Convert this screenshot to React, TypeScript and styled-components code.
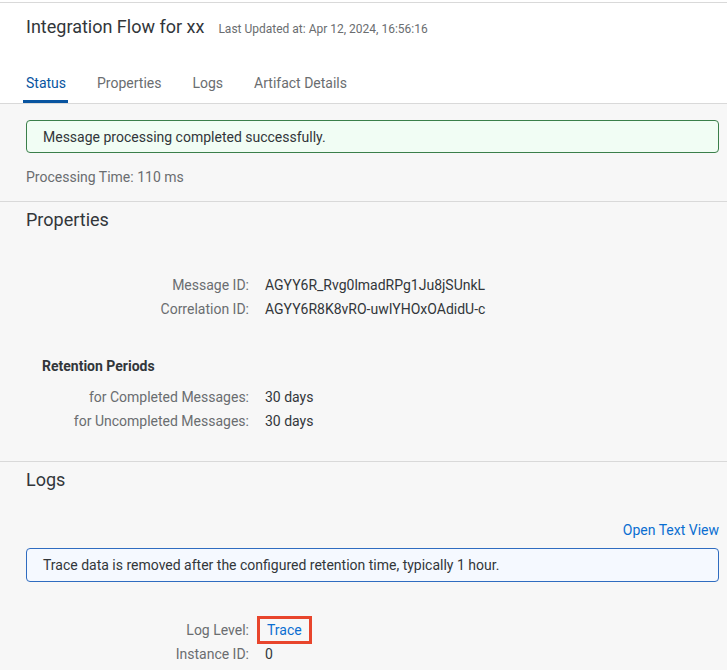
import React from "react";
import styled, { createGlobalStyle } from "styled-components";

const Global = createGlobalStyle`
  html, body { margin: 0; padding: 0; background: #f7f7f7; }
  body { font-family: Roboto, "Liberation Sans", Arial, sans-serif; color: #32363a; }
  * { box-sizing: border-box; }
`;

const Page = styled.div`
  display: flex;
  flex-direction: column;
  padding-top: 2px;
  background: #fff;
`;

const Header = styled.header`
  background: #fff;
  border-top: 1px solid #d9d9d9;
  padding: 12px 26px 0;
  border-bottom: 1px solid #d9d9d9;
`;

const TitleRow = styled.div`
  display: flex;
  align-items: baseline;
  gap: 14px;
  height: 24px;
`;

const Title = styled.h1`
  margin: 0;
  font-size: 18px;
  font-weight: 400;
  line-height: 24px;
  color: #32363a;
`;

const Updated = styled.span`
  font-size: 12px;
  color: #6a6d70;
`;

const Tabs = styled.nav`
  display: flex;
  gap: 31px;
  margin-top: 23px;
  height: 41px;
`;

const Tab = styled.div<{ $active?: boolean }>`
  position: relative;
  display: flex;
  align-items: center;
  font-size: 14px;
  color: ${(p) => (p.$active ? "#0854a0" : "#6a6d70")};
  &::after {
    content: "";
    display: ${(p) => (p.$active ? "block" : "none")};
    position: absolute;
    left: -3px;
    right: -2px;
    bottom: 0;
    height: 3px;
    background: #0854a0;
  }
`;

const Section = styled.section<{ $last?: boolean }>`
  background: #f7f7f7;
  padding: 0 8px 0 26px;
  border-bottom: ${(p) => (p.$last ? "none" : "1px solid #d9d9d9")};
`;

const Strip = styled.div<{ $kind: "success" | "info" }>`
  height: ${(p) => (p.$kind === "success" ? 33 : 34)}px;
  display: flex;
  align-items: center;
  padding: 0 16px;
  border-radius: 4px;
  font-size: 14px;
  color: #32363a;
  border: 1px solid ${(p) => (p.$kind === "success" ? "#3b7f4a" : "#2f6cc0")};
  background: ${(p) => (p.$kind === "success" ? "#f1fdf4" : "#f5f9ff")};
`;

const Muted = styled.div`
  font-size: 14px;
  color: #6a6d70;
  line-height: 18px;
`;

const SectionTitle = styled.h2`
  margin: 0;
  font-size: 18px;
  font-weight: 400;
  line-height: 24px;
  color: #32363a;
`;

const Form = styled.div`
  display: grid;
  grid-template-columns: 223px auto;
  column-gap: 16px;
  row-gap: 6px;
  align-items: center;
`;

const Label = styled.div`
  font-size: 14px;
  line-height: 18px;
  color: #6a6d70;
  text-align: right;
`;

const Value = styled.div`
  font-size: 14px;
  line-height: 18px;
  color: #32363a;
  justify-self: start;
`;

const SubTitle = styled.h3`
  margin: 0 0 0 16px;
  font-size: 14px;
  font-weight: 700;
  line-height: 18px;
  color: #32363a;
`;

const LinkRow = styled.div`
  display: flex;
  justify-content: flex-end;
`;

const Link = styled.a`
  font-size: 14px;
  color: #0a6ed1;
  text-decoration: none;
`;

const Highlight = styled.span`
  display: inline-block;
  border: 3px solid #e8452c;
  padding: 2px 7px;
  margin: -5px 0 -5px -8px;
  color: #0a6ed1;
`;

const Spacer = styled.div<{ $h: number }>`
  height: ${(p) => p.$h}px;
`;

export default function App() {
  return (
    <>
      <Global />
      <Page>
        <Header>
          <TitleRow>
            <Title>Integration Flow for xx</Title>
            <Updated>Last Updated at: Apr 12, 2024, 16:56:16</Updated>
          </TitleRow>
          <Tabs>
            <Tab $active>Status</Tab>
            <Tab>Properties</Tab>
            <Tab>Logs</Tab>
            <Tab>Artifact Details</Tab>
          </Tabs>
        </Header>

        <Section>
          <Spacer $h={16} />
          <Strip $kind="success">Message processing completed successfully.</Strip>
          <Spacer $h={15} />
          <Muted>Processing Time: 110 ms</Muted>
          <Spacer $h={15} />
        </Section>

        <Section>
          <Spacer $h={6} />
          <SectionTitle>Properties</SectionTitle>
          <Spacer $h={44} />
          <Form>
            <Label>Message ID:</Label>
            <Value>AGYY6R_Rvg0lmadRPg1Ju8jSUnkL</Value>
            <Label>Correlation ID:</Label>
            <Value>AGYY6R8K8vRO-uwIYHOxOAdidU-c</Value>
          </Form>
          <Spacer $h={39} />
          <SubTitle>Retention Periods</SubTitle>
          <Spacer $h={13} />
          <Form>
            <Label>for Completed Messages:</Label>
            <Value>30 days</Value>
            <Label>for Uncompleted Messages:</Label>
            <Value>30 days</Value>
          </Form>
          <Spacer $h={31} />
        </Section>

        <Section $last>
          <Spacer $h={6} />
          <SectionTitle>Logs</SectionTitle>
          <Spacer $h={30} />
          <LinkRow>
            <Link href="#">Open Text View</Link>
          </LinkRow>
          <Spacer $h={10} />
          <Strip $kind="info">Trace data is removed after the configured retention time, typically 1 hour.</Strip>
          <Spacer $h={39} />
          <Form>
            <Label>Log Level:</Label>
            <Value>
              <Highlight>Trace</Highlight>
            </Value>
            <Label>Instance ID:</Label>
            <Value>0</Value>
          </Form>
          <Spacer $h={20} />
        </Section>
      </Page>
    </>
  );
}
